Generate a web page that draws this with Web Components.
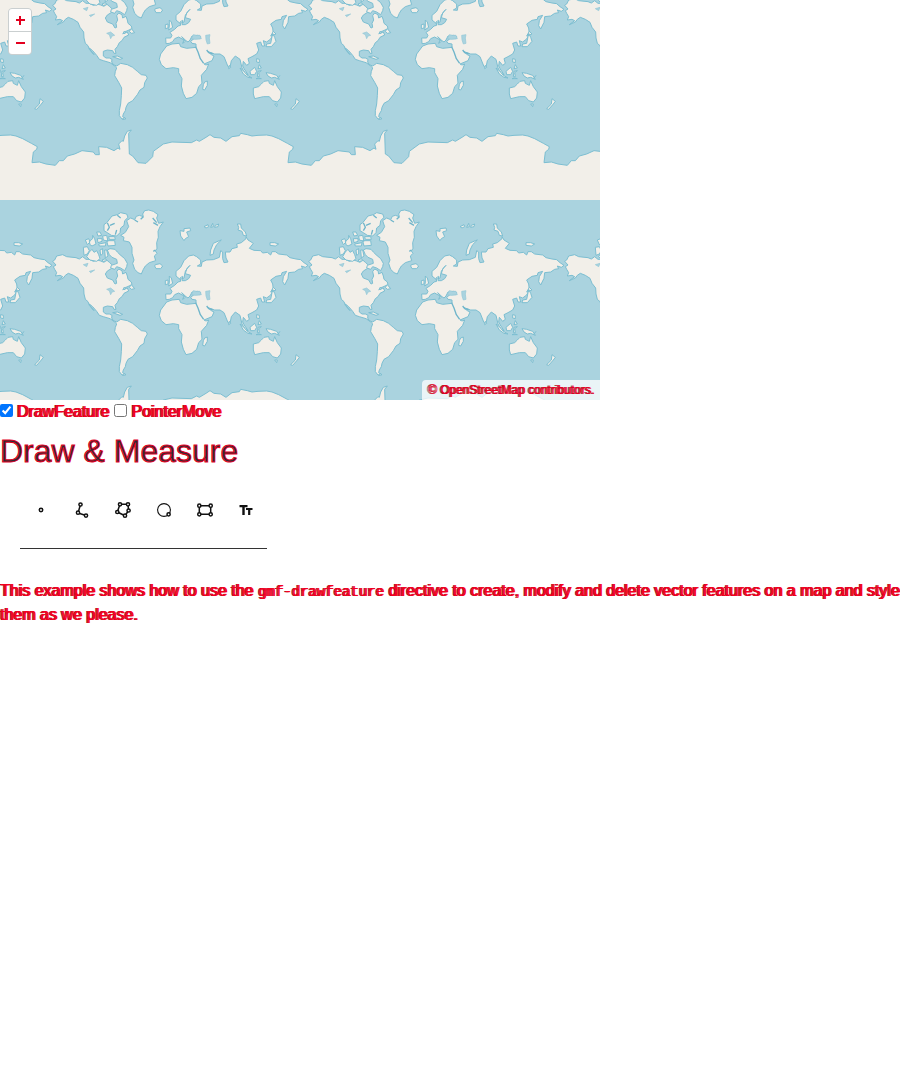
<!DOCTYPE html>
<html lang="en">
<head>
<meta charset="utf-8">
<meta name="viewport" content="width=device-width, initial-scale=1">
<title>Draw &amp; Measure</title>
<style>
body { margin: 0; background: #fff; color: #f3001f; font: 16px/24px "Liberation Sans", Arial, sans-serif; }
</style>
</head>
<body>
<draw-app></draw-app>

<template id="world-map-template">
<style>
:host { display: block; position: relative; width: 100%; max-width: 600px; height: 400px; overflow: hidden; background: #aad3df; }
.map { display: block; width: 600px; height: 400px; }
.land { fill: #f2efe9; stroke: #7cbed1; stroke-width: 3; stroke-linejoin: round; }
.water { fill: #aad3df; stroke: #93c7d7; stroke-width: 2; }
.channel { fill: none; stroke: #6fb5ca; stroke-width: 4; stroke-linejoin: round; }
.zoom { position: absolute; top: 8px; left: 8px; display: flex; flex-direction: column; gap: 1px; border: 1px solid #cacfd0; border-radius: 4px; background: #cacfd0; overflow: hidden; }
button { display: flex; align-items: center; justify-content: center; width: 22px; height: 22px; padding: 0; border: 0; background: #fff; }
.attribution { position: absolute; right: 0; bottom: 0; padding: 0 6px; border-radius: 4px 0 0; background: rgba(255,255,255,.75); font-size: 12px; line-height: 20px; color: #e3001f; text-shadow: 1px 0 #f3001f, -1px 0 #7a5055; white-space: nowrap; }
.attribution a { color: inherit; text-decoration: none; }
</style>
<svg class="map" viewBox="0 0 1800 1200" role="img" aria-label="World map">
<defs>
<clipPath id="band"><path d="M0 0H1100V768H0Z"/></clipPath>
<clipPath id="tile"><path d="M132 0H900V768H132Z"/></clipPath>
<g id="world" clip-path="url(#band)">
<path class="land" d="M160 200L168 195 158 184 164 180 170 168 188 164 200 170 228 173 238 177 248 170 258 178 268 178 280 184 292 180 302 183 312 187 320 180 328 187 338 196 335 205 322 213 316 222 322 234 338 240 345 252 350 250 348 238 353 228 350 215 356 207 366 212 368 222 378 217 382 228 384 238 394 246 396 254 378 262 368 269 382 264 386 273 372 280 366 290 358 296 352 308 345 316 348 328 342 328 338 320 322 318 310 322 310 336 318 342 328 342 336 346 335 354 340 362 350 366 362 358 382 362 398 370 412 382 424 392 438 394 442 402 434 416 432 430 420 438 412 452 398 470 384 478 378 490 376 500 370 510 368 518 376 524 366 525 358 515 358 500 362 480 364 455 365 432 356 415 344 395 346 382 350 372 342 364 330 356 310 350 298 346 290 334 278 320 268 312 272 320 282 332 268 316 264 305 256 298 252 282 251 264 240 250 234 235 220 226 205 220 196 226 190 234 172 242 188 230 180 226 166 228 170 218 164 208Z"/>
<path class="land" d="M362 106L376 97 386 80 380 62 392 54 404 59 409 49 418 46 430 50 428 42 434 32 446 30 460 34 474 44 470 54 476 70 490 66 480 80 474 94 475 112 470 128 471 145 466 153 471 160 463 168 467 182 448 188 436 198 430 208 424 222 414 218 404 208 398 190 402 180 396 160 396 142 388 126 370 122 372 112Z"/>
<path class="channel" d="M404 60L414 66M430 50L422 58M458 54L470 68M460 68L474 76M466 150L460 154"/>
<path class="land" d="M322 66L336 48 352 44 362 38 380 42 384 52 374 62 372 76 362 84 360 98 350 108 334 106 322 98 312 92 312 74 320 68Z"/>
<path class="channel" d="M322 68L328 82 322 92M352 46L362 54M330 76L344 70M346 104L350 90"/>
<path class="land" d="M322 150L330 146 345 148 352 156 360 164 374 176 382 190 380 200 374 212 362 204 350 200 344 208 332 204 334 196 352 190 350 178 336 172 328 164ZM268 156L276 148 282 157 290 152 296 164 300 176 290 184 270 180 260 170ZM250 142L262 140 268 152 262 162 252 166ZM256 120L266 116 270 126 262 134ZM268 124L278 116 278 106 284 116 288 132 276 138 270 134ZM290 96L300 96 305 106 294 108ZM292 116L306 116 306 124 294 128ZM308 108L320 106 324 124 310 120ZM296 132L318 128 316 138 298 138ZM320 122L344 122 346 136 324 138ZM300 150L308 146 308 162 302 166ZM314 150L320 150 324 168 316 174ZM306 180L316 176 320 182 310 184ZM326 110L344 110 346 118 328 118ZM466 194L480 191 488 198 482 206 468 206 464 198ZM338 338L352 336 368 343 360 346ZM388 262L394 254 404 266 394 268ZM372 520L378 524 368 526ZM370 264L376 262 374 270Z"/>
<path class="land" d="M498 299L497 282 512 282 516 274 510 265 524 256 534 246 542 244 540 234 548 229 546 242 556 242 566 236 572 226 556 221 560 207 570 196 564 202 556 214 552 234 540 238 528 228 528 214 542 202 552 182 566 168 580 165 590 170 602 180 602 192 592 198 604 199 606 186 620 180 640 179 658 172 662 152 668 156 668 176 672 188 684 186 678 174 676 156 690 156 696 146 712 142 710 132 724 128 738 116 738 110 744 120 760 130 748 145 762 151 782 152 788 159 802 157 812 165 816 155 826 155 836 162 860 165 870 173 888 177 902 179 912 188 924 196 916 202 904 198 908 206 896 208 884 216 866 218 864 235 854 255 848 245 850 230 860 214 846 218 844 226 828 229 812 240 818 252 820 270 812 285 800 294 790 290 794 306 786 306 782 294 770 298 776 318 770 330 756 338 744 344 748 358 740 364 730 352 728 366 732 374 744 392 736 388 726 372 720 346 706 336 694 350 690 370 684 368 672 338 660 330 644 330 622 322 634 332 642 336 636 350 612 360 618 363 626 360 620 376 604 394 606 418 596 428 590 448 576 460 558 464 550 448 544 426 546 404 536 386 536 374 520 371 498 374 484 362 478 346 482 330 500 306 516 300 538 298 542 308 560 313 588 310 588 300 576 298 572 292 582 284 600 284 602 278 592 274 582 276 576 276 570 288 564 294 558 290 545 278 556 292 548 298 552 288 536 279 524 284 518 293 508 298Z"/>
<path class="water" d="M574 284L580 272 590 274 600 274 604 284 586 286ZM617 274L630 272 628 282 630 298 622 300 618 288Z"/>
<path class="channel" d="M587 308L594 324 601 344 611 358M620 318L626 326 638 329"/>
<path class="land" d="M508 228L514 234 518 250 506 258 508 246ZM496 242L504 240 504 252 496 254ZM540 92L552 94 552 86 570 84 572 92 560 96 566 110 556 116 552 122 542 108ZM612 80L624 74 626 80 618 84ZM638 70L640 80 632 82ZM646 76L656 72 654 80 644 82ZM712 72L722 72 724 84 736 96 740 108 730 106 726 94 714 90 716 82ZM664 120L650 134 642 150 640 162 630 166 632 150 640 130 658 122ZM810 128L824 128 836 132 826 138 810 136ZM614 414L622 411 622 424 614 438 608 436 610 422ZM688 364L692 370 686 374ZM720 372L730 380 742 394 756 402 744 400 730 390ZM750 382L764 370 770 382 764 392 752 392ZM774 382L784 380 776 386 778 398 772 398ZM770 344L778 346 778 356 770 354ZM778 362L784 372 774 374ZM798 386L812 388 830 394 838 406 824 400 814 402 804 396ZM818 268L824 280 828 292 814 308 798 308 800 300 812 298ZM812 276L820 262 828 270ZM760 432L776 428 784 420 792 412 806 410 808 418 820 424 824 410 832 428 844 444 842 462 832 474 818 470 808 458 790 458 764 464 760 450ZM824 480L832 480 830 488ZM888 464L898 472 892 480 878 496 872 494 886 480ZM768 404L776 402 784 404ZM840 394L834 402"/>
<path class="water" stroke="none" d="M250 194L264 190 260 200ZM268 214L284 210 272 218ZM320 268L332 264 344 274 336 276 332 284 328 272Z"/>
<g clip-path="url(#tile)"><path class="land" d="M-10 580L10 575 40 573 68 584 94 600 112 608 110 616 100 624 96 656 118 654 138 660 166 664 178 650 190 650 202 636 224 630 246 620 280 624 286 632 298 632 296 608 320 610 342 620 354 612 360 616 356 600 366 590 370 592 374 576 382 562 394 558 386 568 388 630 398 636 414 656 438 658 458 638 460 622 490 600 516 594 574 596 590 588 598 592 618 580 630 572 642 580 662 582 678 592 696 578 718 575 722 568 742 572 756 576 774 574 800 573 816 576 836 584 862 598 880 608 878 616 868 624 864 656 886 654 906 660 934 664 950 650V790H-10Z"/></g>
</g>
</defs>
<use href="#world" x="-768" y="-168"/><use href="#world" x="1536" y="-168"/><use href="#world" x="768" y="-168"/><use href="#world" y="-168"/>
<path fill="#aad3df" d="M0 600H1800V1200H0Z"/>
<use href="#world" x="-768" y="600"/><use href="#world" x="1536" y="600"/><use href="#world" x="768" y="600"/><use href="#world" y="600"/>
</svg>
<div class="zoom">
<button type="button" aria-label="Zoom in"><svg width="10" height="10"><path d="M1 5H10M5 1V10" fill="none" stroke="#e3001f" stroke-width="2"/></svg></button>
<button type="button" aria-label="Zoom out"><svg width="10" height="10"><path d="M1 5H10" fill="none" stroke="#e3001f" stroke-width="2"/></svg></button>
</div>
<div class="attribution">© <a href="#copyright">OpenStreetMap</a> contributors.</div>
</template>

<template id="draw-tools-template">
<style>
:host { display: flex; width: 247px; height: 77px; margin: 0 20px; border-bottom: 1px solid #333; box-sizing: border-box; }
button { display: flex; justify-content: center; align-items: center; width: 41px; height: 76px; padding: 0; border: 0; background: transparent; }
svg { display: block; width: 18px; height: 18px; fill: none; stroke: #111; stroke-width: 1.5; }
circle { fill: #fff; }
.text { fill: #111; stroke: none; }
</style>
<button type="button" aria-label="Draw point"><svg viewBox="0 0 18 18"><circle cx="9" cy="9" r="1.7"/></svg></button>
<button type="button" aria-label="Draw line"><svg viewBox="0 0 18 18"><path d="M7.5 3.5L5 12L13 14.5"/><circle cx="7.5" cy="3.5" r="1.6"/><circle cx="5" cy="11.7" r="1.6"/><circle cx="13" cy="14.6" r="1.6"/></svg></button>
<button type="button" aria-label="Draw polygon"><svg viewBox="0 0 18 18"><path d="M6 3.3H14L14.6 9.5 11 14.7 3.3 11Z"/><circle cx="6" cy="3.3" r="1.6"/><circle cx="14" cy="3.3" r="1.6"/><circle cx="14.6" cy="9.5" r="1.6"/><circle cx="11" cy="14.7" r="1.6"/><circle cx="3.3" cy="11" r="1.6"/></svg></button>
<button type="button" aria-label="Draw circle"><svg viewBox="0 0 18 18"><circle cx="9" cy="9" r="6.4" stroke-width="1.1"/><circle cx="13.6" cy="13.3" r="1.6"/></svg></button>
<button type="button" aria-label="Draw rectangle"><svg viewBox="0 0 18 18"><path d="M3.3 4.7H14.7V13.3H3.3Z"/><circle cx="3.3" cy="4.7" r="1.6"/><circle cx="14.7" cy="4.7" r="1.6"/><circle cx="14.7" cy="13.3" r="1.6"/><circle cx="3.3" cy="13.3" r="1.6"/></svg></button>
<button type="button" aria-label="Draw text"><svg viewBox="0 0 18 18"><path class="text" d="M2.5 4H10.5V6.2H7.7V14H5.3V6.2H2.5ZM9 7H15.5V9H13.3V14H11.1V9H9Z"/></svg></button>
</template>

<template id="layer-toggle-template">
<style>
:host { display: block; }
label { display: flex; align-items: center; gap: 4px; height: 24px; text-shadow: 1px 0, -1px 0 #a01526; }
input { width: 13px; height: 13px; margin: 0 0 3px; }
</style>
<label><input type="checkbox"><span></span></label>
</template>

<template id="draw-app-template">
<style>
:host { display: block; }
.options { display: flex; gap: 5px; height: 24px; margin-bottom: 8px; }
h2 { margin: 0 0 2px; color: #292b34; font-size: 32px; line-height: 38px; font-weight: 400; -webkit-text-stroke: 1px #e3001f; }
p { margin: 30px 0 16px; text-shadow: 1px 0, -1px 0 #a01526; }
code { font: 14px "Liberation Mono", monospace; }
</style>
<world-map></world-map>
<div class="options"><layer-toggle name="DrawFeature" checked></layer-toggle><layer-toggle name="PointerMove"></layer-toggle></div>
<h2>Draw &amp; Measure</h2>
<draw-tools></draw-tools>
<p>This example shows how to use the <code>gmf-drawfeature</code> directive to create, modify and delete vector features on a map and style them as we please.</p>
</template>

<script>
function mount(host, id) {
  const root = host.attachShadow({ mode: 'open' });
  root.append(document.getElementById(id).content.cloneNode(true));
  return root;
}
class WorldMap extends HTMLElement { constructor() { super(); mount(this, 'world-map-template'); } }
class DrawTools extends HTMLElement { constructor() { super(); mount(this, 'draw-tools-template'); } }
class LayerToggle extends HTMLElement {
  connectedCallback() {
    if (this.shadowRoot) return;
    const root = mount(this, 'layer-toggle-template');
    root.querySelector('span').textContent = this.getAttribute('name');
    root.querySelector('input').checked = this.hasAttribute('checked');
  }
}
class DrawApp extends HTMLElement { constructor() { super(); mount(this, 'draw-app-template'); } }
customElements.define('world-map', WorldMap);
customElements.define('draw-tools', DrawTools);
customElements.define('layer-toggle', LayerToggle);
customElements.define('draw-app', DrawApp);
</script>
</body>
</html>
